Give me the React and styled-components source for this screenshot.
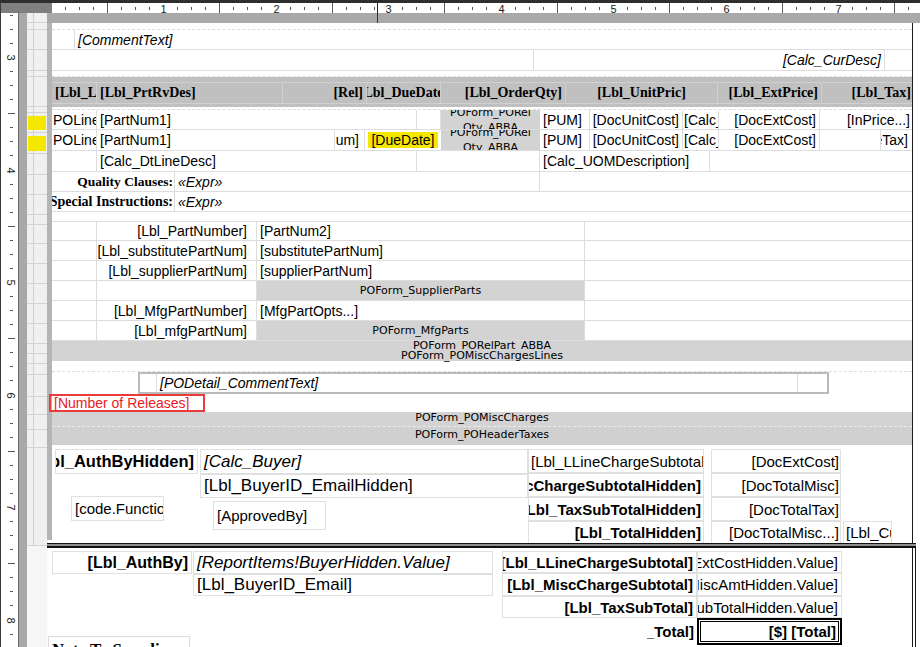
import styled, { createGlobalStyle, css } from "styled-components";

const SANS = '"Liberation Sans", Arial, sans-serif';
const SERIF = '"Liberation Serif", "Times New Roman", serif';
const TAHOMA = '"DejaVu Sans", Verdana, sans-serif';

const EIGHTH = 112.5 / 8;

const GlobalStyle = createGlobalStyle`
  html, body {
    margin: 0;
    padding: 0;
    background: #ffffff;
    overflow: hidden;
  }
  body {
    font-family: ${SANS};
  }
`;

const JUSTIFY = { left: "flex-start", right: "flex-end", center: "center" };

const textStyle = css`
  box-sizing: border-box;
  overflow: hidden;
  white-space: nowrap;
  display: flex;
  align-items: center;
  justify-content: ${(p) => JUSTIFY[p.$align || "left"]};
  font-family: ${(p) => (p.$serif ? SERIF : SANS)};
  font-size: ${(p) => p.$size || 14}px;
  font-weight: ${(p) => (p.$bold ? 700 : 400)};
  font-style: ${(p) => (p.$italic ? "italic" : "normal")};
  color: ${(p) => p.$color || "#000"};
`;

function TopRuler() {
  const marks = [];
  for (let n = 1; n < 64; n++) {
    const x = Math.round(50.5 + n * EIGHTH - 52) + 0.5;
    if (x > 868) break;
    if (n % 8 === 0) {
      marks.push(
        <RulerNumber key={n} x={x} y={9.5} textAnchor="middle">
          {n / 8}
        </RulerNumber>
      );
    } else if (n % 4 === 0) {
      marks.push(<line key={n} x1={x} x2={x} y1={0} y2={10} />);
    } else {
      marks.push(<line key={n} x1={x} x2={x} y1={4} y2={7} />);
    }
  }
  return (
    <RulerSvg width={868} height={10} stroke="#555" strokeWidth="1">
      {marks}
      <line x1={325.5} x2={325.5} y1={0} y2={10} stroke="#222" />
    </RulerSvg>
  );
}

function LeftRuler() {
  const marks = [];
  for (let n = 21; n < 70; n++) {
    const y = Math.round(-280.5 + n * EIGHTH - 13) + 0.5;
    if (y < 0) continue;
    if (y > 634) break;
    if (n % 8 === 0) {
      marks.push(
        <RulerNumber
          key={n}
          x={10}
          y={y}
          textAnchor="middle"
          dominantBaseline="central"
          transform={`rotate(90 10 ${y})`}
        >
          {n / 8}
        </RulerNumber>
      );
    } else if (n % 4 === 0) {
      marks.push(<line key={n} x1={7} x2={14} y1={y} y2={y} />);
    } else {
      marks.push(<line key={n} x1={9} x2={12} y1={y} y2={y} />);
    }
  }
  return (
    <RulerSvg width={17} height={634} stroke="#555" strokeWidth="1">
      {marks}
    </RulerSvg>
  );
}

// row heights of the tablix row handles, top to bottom (px)
const HANDLE_ROWS = [10, 7, 20, 21, 6, 30, 3, 20, 21, 21, 20, 20, 10, 19, 20, 20, 20, 20, 20, 10, 10, 11, 22, 18, 15, 18, 98];
const MARKED = [7, 8];

function App() {
  return (
    <>
      <GlobalStyle />
      <Designer>
        <RulerRow>
          <Corner />
          <TopRuler />
        </RulerRow>
        <Body>
          <LeftRuler />
          <Gutter />
          <Handles>
            {HANDLE_ROWS.map((h, i) => (
              <HandleCell key={i} $h={h}>
                {MARKED.includes(i) && <HandleMark />}
              </HandleCell>
            ))}
            <HandleRest />
          </Handles>

          <Surface>
            <PrevBand />
            <ReportBody>
              <HandleBar />
              <Content>
                <Row $h={7} $dashed />
                <Row $h={20}>
                  <Cell $w={23} />
                  <Cell $w={837} $italic $plain>[CommentText]</Cell>
                </Row>
                <Row $h={21}>
                  <Cell $w={482} />
                  <Cell $w={351} $align="right" $italic>[Calc_CurDesc]</Cell>
                  <Cell $w={27} $plain />
                </Row>
                <Row $h={6} $dashed />

                <HeaderBand>
                  <HeaderRow>
                    <HeaderCell $w={45}>[Lbl_LineNum]</HeaderCell>
                    <HeaderCell $w={186}>[Lbl_PrtRvDes]</HeaderCell>
                    <HeaderCell $w={47} $plain />
                    <HeaderCell $w={37} $align="right">[Rel]</HeaderCell>
                    <HeaderCell $w={74} $align="center">[Lbl_DueDate]</HeaderCell>
                    <HeaderCell $w={125} $align="right">[Lbl_OrderQty]</HeaderCell>
                    <HeaderCell $w={152} $align="center">[Lbl_UnitPric]</HeaderCell>
                    <HeaderCell $w={104} $align="right">[Lbl_ExtPrice]</HeaderCell>
                    <HeaderCell $w={90} $align="right" $pad="0 1px 0 3px" $plain>[Lbl_Tax]</HeaderCell>
                  </HeaderRow>
                </HeaderBand>
                <Row $h={3} $dashed />

                <Row $h={20}>
                  <Cell $w={45} $pad="0 0 0 1px">POLineNum</Cell>
                  <Cell $w={320}>[PartNum1]</Cell>
                  <Cell $w={24} />
                  <SubReport $w={99}>
                    <span>POForm_PORel</span>
                    <span>Qty_ABBA</span>
                  </SubReport>
                  <Cell $w={50}>[PUM]</Cell>
                  <Cell $w={93} $align="right">[DocUnitCost]</Cell>
                  <Cell $w={36} $pad="0 0 0 1px">[Calc_Price]</Cell>
                  <Cell $w={101} $align="right">[DocExtCost]</Cell>
                  <Cell $w={92} $align="right" $pad="0 2px" $plain>[InPrice...]</Cell>
                </Row>
                <Row $h={21}>
                  <Cell $w={45} $pad="0 0 0 1px">POLineNum</Cell>
                  <Cell $w={238}>[PartNum1]</Cell>
                  <Cell $w={30} $align="right" $pad="0 5px 0 0">[RelNum]</Cell>
                  <Cell $w={76} $align="center" $plain>
                    <DueDate>[DueDate]</DueDate>
                  </Cell>
                  <SubReport $w={99}>
                    <span>POForm_PORel</span>
                    <span>Qty_ABBA</span>
                  </SubReport>
                  <Cell $w={50}>[PUM]</Cell>
                  <Cell $w={93} $align="right">[DocUnitCost]</Cell>
                  <Cell $w={36} $pad="0 0 0 1px">[Calc_Price]</Cell>
                  <Cell $w={101} $align="right">[DocExtCost]</Cell>
                  <Cell $w={61} />
                  <Cell $w={31} $align="right" $pad="0 4px 0 0" $plain>[LineTax]</Cell>
                </Row>
                <Row $h={21}>
                  <Cell $w={45} />
                  <Cell $w={320}>[Calc_DtLineDesc]</Cell>
                  <Cell $w={123} />
                  <Cell $w={170}>[Calc_UOMDescription]</Cell>
                  <Cell $w={202} $plain />
                </Row>
                <Row $h={20}>
                  <Cell $w={123} $align="right" $serif $bold $size={13.5} $pad="0 1px 0 0">Quality Clauses:</Cell>
                  <Cell $w={365} $italic>«Expr»</Cell>
                  <Cell $w={372} $plain />
                </Row>
                <Row $h={20}>
                  <Cell $w={123} $align="right" $serif $bold $pad="0 1px 0 0">Special Instructions:</Cell>
                  <Cell $w={737} $italic $plain>«Expr»</Cell>
                </Row>
                <Row $h={10} />

                <PartRow $h={19} label="[Lbl_PartNumber]" value="[PartNum2]" />
                <PartRow label="[Lbl_substitutePartNum]" value="[substitutePartNum]" />
                <PartRow label="[Lbl_supplierPartNum]" value="[supplierPartNum]" />
                <PartRow sub="POForm_SupplierParts" />
                <PartRow label="[Lbl_MfgPartNumber]" value="[MfgPartOpts...]" />
                <PartRow label="[Lbl_mfgPartNum]" sub="POForm_MfgParts" />

                <GrayBand $h={10} $lh={10}>POForm_PORelPart_ABBA</GrayBand>
                <GrayBand $h={10} $lh={9}>POForm_POMiscChargesLines</GrayBand>
                <Row $h={11} $dashed />

                <Row $h={22} $plain>
                  <CommentFrame>
                    <Cell $w={17} />
                    <Cell $w={641} $italic>[PODetail_CommentText]</Cell>
                    <Cell $w={29} $plain />
                  </CommentFrame>
                </Row>
                <Row $h={18} $plain>
                  <Releases>[Number of Releases]</Releases>
                </Row>
                <GrayBand $h={15} $lh={12} $dashed>POForm_POMiscCharges</GrayBand>
                <GrayBand $h={18} $lh={16} $bg="#d0d0d0">POForm_POHeaderTaxes</GrayBand>

                <GroupFooter>
                  <FooterLeft>
                    <FieldRow>
                      <Field $w={143} $h={25} $ml={3} $align="right" $bold $size={16.5}>
                        [Lbl_AuthByHidden]
                      </Field>
                      <Field $w={328} $h={25} $ml={2} $italic $size={17}>
                        [Calc_Buyer]
                      </Field>
                    </FieldRow>
                    <FieldRow>
                      <Field $w={328} $h={24} $ml={148} $size={17}>
                        [Lbl_BuyerID_EmailHidden]
                      </Field>
                    </FieldRow>
                    <FieldRow $mt={-2}>
                      <Field $w={93} $h={25} $ml={19} $size={15}>
                        [code.Function]
                      </Field>
                      <Field $w={113} $h={29} $ml={49} $mt={5} $size={15}>
                        [ApprovedBy]
                      </Field>
                    </FieldRow>
                  </FooterLeft>
                  <FooterRight>
                    <TotalsLine
                      $h={24}
                      label="[Lbl_LLineChargeSubtotal]"
                      labelAlign="left"
                      value="[DocExtCost]"
                    />
                    <TotalsLine $h={24} label="[Lbl_MiscChargeSubtotalHidden]" bold value="[DocTotalMisc]" />
                    <TotalsLine $h={24} label="[Lbl_TaxSubTotalHidden]" bold value="[DocTotalTax]" />
                    <TotalsLine
                      $h={23}
                      label="[Lbl_TotalHidden]"
                      bold
                      value="[DocTotalMisc...]"
                      extra="[Lbl_Currency]"
                    />
                  </FooterRight>
                </GroupFooter>
              </Content>
              <EdgeLine />
              <Outside />
            </ReportBody>

            <DoubleRule />

            <PageFooter>
              <PageLeft>
                <FieldRow>
                  <Field $w={140} $h={23} $ml={5} $align="right" $bold $size={16}>
                    [Lbl_AuthBy]
                  </Field>
                  <Field $w={300} $h={23} $ml={1} $italic $size={17}>
                    [ReportItems!BuyerHidden.Value]
                  </Field>
                </FieldRow>
                <FieldRow>
                  <Field $w={300} $h={22} $ml={146} $size={17}>
                    [Lbl_BuyerID_Email]
                  </Field>
                </FieldRow>
                <FieldRow $mt={40}>
                  <NoteBox>Note To Supplier:</NoteBox>
                </FieldRow>
              </PageLeft>
              <PageRight>
                <FieldRow>
                  <Field $w={195} $h={22} $align="right" $bold $size={15}>
                    [Lbl_LLineChargeSubtotal]
                  </Field>
                  <Field $w={145} $h={22} $align="right" $size={15}>
                    [ReportItems!DocExtCostHidden.Value]
                  </Field>
                </FieldRow>
                <FieldRow>
                  <Field $w={195} $h={23} $align="right" $bold $size={15}>
                    [Lbl_MiscChargeSubtotal]
                  </Field>
                  <Field $w={145} $h={23} $align="right" $size={15}>
                    [ReportItems!MiscAmtHidden.Value]
                  </Field>
                </FieldRow>
                <FieldRow>
                  <Field $w={195} $h={22} $align="right" $bold $size={15}>
                    [Lbl_TaxSubTotal]
                  </Field>
                  <Field $w={145} $h={22} $align="right" $size={15}>
                    [ReportItems!TaxSubTotalHidden.Value]
                  </Field>
                </FieldRow>
                <FieldRow>
                  <Field $w={50} $h={27} $ml={145} $align="right" $bold $size={15} $noBorder>
                    [Lbl_Total]
                  </Field>
                  <GrandTotal>[$] [Total]</GrandTotal>
                </FieldRow>
              </PageRight>
            </PageFooter>
          </Surface>
        </Body>
      </Designer>
    </>
  );
}

function PartRow({ $h = 20, label, value, sub }) {
  return (
    <Row $h={$h}>
      <Cell $w={45} />
      <Cell $w={160} $align="right" $pad="0 9px 0 0">
        {label}
      </Cell>
      {sub ? (
        <Cell $w={328} $align="center" $bg="#d3d3d3" $tahoma>
          {sub}
        </Cell>
      ) : (
        <Cell $w={328}>{value}</Cell>
      )}
      <Cell $w={327} $plain />
    </Row>
  );
}

function TotalsLine({ $h, label, labelAlign = "right", bold, value, extra }) {
  return (
    <FieldRow>
      <Field $w={176} $h={$h} $align={labelAlign} $bold={bold} $size={15} $pad="0 2px">
        {label}
      </Field>
      <Field $w={130} $h={$h} $ml={7} $align="right" $size={15} $pad="0 1px">
        {value}
      </Field>
      {extra && (
        <Field $w={49} $h={$h} $ml={2} $size={15} $pad="0 2px">
          {extra}
        </Field>
      )}
    </FieldRow>
  );
}

export default App;

const Designer = styled.div`
  width: 920px;
  height: 647px;
  box-sizing: border-box;
  border-top: 3px solid #2e2e2e;
  border-left: 1px solid #3c3c3c;
  display: flex;
  flex-direction: column;
  overflow: hidden;
  background: #ffffff;
`;

const RulerRow = styled.div`
  display: flex;
  height: 10px;
  flex: none;
`;

const Corner = styled.div`
  width: 51px;
  background: #7f7f7f;
`;

const RulerSvg = styled.svg`
  display: block;
  flex: none;
  background: #ffffff;
`;

const RulerNumber = styled.text`
  font-family: ${SANS};
  font-size: 11px;
  fill: #222;
  stroke: none;
`;

const Body = styled.div`
  display: flex;
  flex: 1;
  min-height: 0;
`;

const Gutter = styled.div`
  width: 9px;
  box-sizing: border-box;
  border-left: 1px solid #6a6a6a;
  background: #a8a8a8;
`;

const Handles = styled.div`
  width: 20px;
  display: flex;
  flex-direction: column;
  background: #f0f0f0;
`;

const HandleCell = styled.div`
  height: ${(p) => p.$h}px;
  flex: none;
  box-sizing: border-box;
  border-bottom: 1px solid #d4d4d4;
  background: linear-gradient(to right, transparent 6px, #cfcfcf 6px, #cfcfcf 7px, transparent 7px);
  padding: 3px 1px 2px 1px;
`;

const HandleMark = styled.div`
  height: 100%;
  background: #f5e800;
`;

const HandleRest = styled.div`
  flex: 1;
  background: #f6f6f6;
`;

const Surface = styled.div`
  width: 873px;
  display: flex;
  flex-direction: column;
`;

const PrevBand = styled.div`
  height: 10px;
  flex: none;
  background: linear-gradient(to right, transparent 330px, #333 330px, #333 331px, transparent 331px), #a9a9a9;
`;

const ReportBody = styled.div`
  height: 520px;
  flex: none;
  display: flex;
`;

const HandleBar = styled.div`
  width: 5px;
  height: 517px;
  background: #b5b5b5;
`;

const Content = styled.div`
  width: 860px;
  display: flex;
  flex-direction: column;
`;

const EdgeLine = styled.div`
  width: 1px;
  background: #1a1a1a;
`;

const Outside = styled.div`
  flex: 1;
  background: #ffffff;
`;

const Row = styled.div`
  display: flex;
  flex: none;
  height: ${(p) => p.$h}px;
  box-sizing: border-box;
  border-bottom: ${(p) => (p.$plain ? "none" : `1px ${p.$dashed ? "dashed" : "solid"} #dddddd`)};
`;

const Cell = styled.div`
  ${textStyle};
  flex: none;
  width: ${(p) => p.$w}px;
  height: 100%;
  padding: ${(p) => p.$pad || "0 3px"};
  border-right: ${(p) => (p.$plain ? "none" : `1px solid ${p.$line || "#dddddd"}`)};
  background: ${(p) => p.$bg || "transparent"};
  ${(p) =>
    p.$tahoma &&
    css`
      font-family: ${TAHOMA};
      font-size: 11px;
    `}
`;

const HeaderBand = styled.div`
  flex: none;
  height: 30px;
  box-sizing: border-box;
  padding: 5px 0 3px;
  background: #c0c0c0;
`;

const HeaderRow = styled.div`
  display: flex;
  height: 100%;
  box-sizing: border-box;
  border-top: 1px solid #d0d0d0;
  border-bottom: 1px solid #d0d0d0;
`;

const HeaderCell = styled(Cell).attrs({ $serif: true, $bold: true, $line: "#d0d0d0" })``;

const SubReport = styled.div`
  flex: none;
  width: ${(p) => p.$w}px;
  height: 100%;
  box-sizing: border-box;
  display: flex;
  flex-direction: column;
  align-items: center;
  justify-content: center;
  overflow: hidden;
  background: #d3d3d3;
  font-family: ${TAHOMA};
  font-size: 11px;
  line-height: 15px;
  white-space: nowrap;
  color: #000;
`;

const DueDate = styled.span`
  background: #f5e800;
  padding: 0 3px;
  line-height: 16px;
`;

const GrayBand = styled.div`
  flex: none;
  height: ${(p) => p.$h}px;
  box-sizing: border-box;
  background: ${(p) => p.$bg || "#d3d3d3"};
  border-bottom: ${(p) => (p.$dashed ? "1px dashed #ececec" : "none")};
  text-align: center;
  font-family: ${TAHOMA};
  font-size: 11px;
  line-height: ${(p) => p.$lh}px;
  white-space: nowrap;
  color: #000;
`;

const CommentFrame = styled.div`
  display: flex;
  margin-left: 86px;
  width: 691px;
  height: 22px;
  box-sizing: border-box;
  border: 2px solid #bababa;
`;

const Releases = styled.div`
  ${textStyle};
  margin-left: -3px;
  width: 156px;
  height: 18px;
  padding-left: 3px;
  border: 2px solid #ea3b3b;
  color: #e8201c;
`;

const GroupFooter = styled.div`
  flex: none;
  height: 98px;
  display: flex;
`;

const FooterLeft = styled.div`
  width: 476px;
  box-sizing: border-box;
  padding-top: 4px;
  display: flex;
  flex-direction: column;
`;

const FooterRight = styled.div`
  width: 384px;
  box-sizing: border-box;
  padding-top: 4px;
  display: flex;
  flex-direction: column;
`;

const FieldRow = styled.div`
  display: flex;
  align-items: flex-start;
  flex: none;
  margin-top: ${(p) => p.$mt || 0}px;
`;

const Field = styled.div`
  ${textStyle};
  flex: none;
  width: ${(p) => p.$w}px;
  height: ${(p) => p.$h}px;
  margin-left: ${(p) => p.$ml || 0}px;
  margin-top: ${(p) => p.$mt || 0}px;
  padding: ${(p) => p.$pad || "0 3px"};
  border: ${(p) => (p.$noBorder ? "none" : "1px solid #e0e0e0")};
`;

const DoubleRule = styled.div`
  flex: none;
  width: 869px;
  height: 5px;
  box-sizing: border-box;
  border-top: 1px solid #111;
  border-bottom: 2px solid #111;
  background: #8e8e8e;
`;

const PageFooter = styled.div`
  flex: none;
  width: 869px;
  height: 99px;
  box-sizing: border-box;
  border-right: 4px double #1a1a1a;
  display: flex;
  overflow: hidden;
`;

const PageLeft = styled.div`
  width: 455px;
  box-sizing: border-box;
  padding-top: 3px;
  display: flex;
  flex-direction: column;
`;

const PageRight = styled.div`
  width: 340px;
  box-sizing: border-box;
  padding-top: 3px;
  display: flex;
  flex-direction: column;
`;

const NoteBox = styled.div`
  margin-left: 1px;
  width: 142px;
  height: 24px;
  box-sizing: border-box;
  border: 1px solid #dcdcdc;
  padding: 3px 3px 0;
  font-family: ${SERIF};
  font-weight: 700;
  font-size: 17px;
  white-space: nowrap;
  overflow: hidden;
`;

const GrandTotal = styled.div`
  ${textStyle};
  flex: none;
  width: 145px;
  height: 27px;
  justify-content: flex-end;
  padding-right: 4px;
  border: 2px solid #000;
  box-shadow: inset 0 0 0 1px #fff, inset 0 0 0 2px #000;
  font-weight: 700;
  font-size: 15px;
`;
